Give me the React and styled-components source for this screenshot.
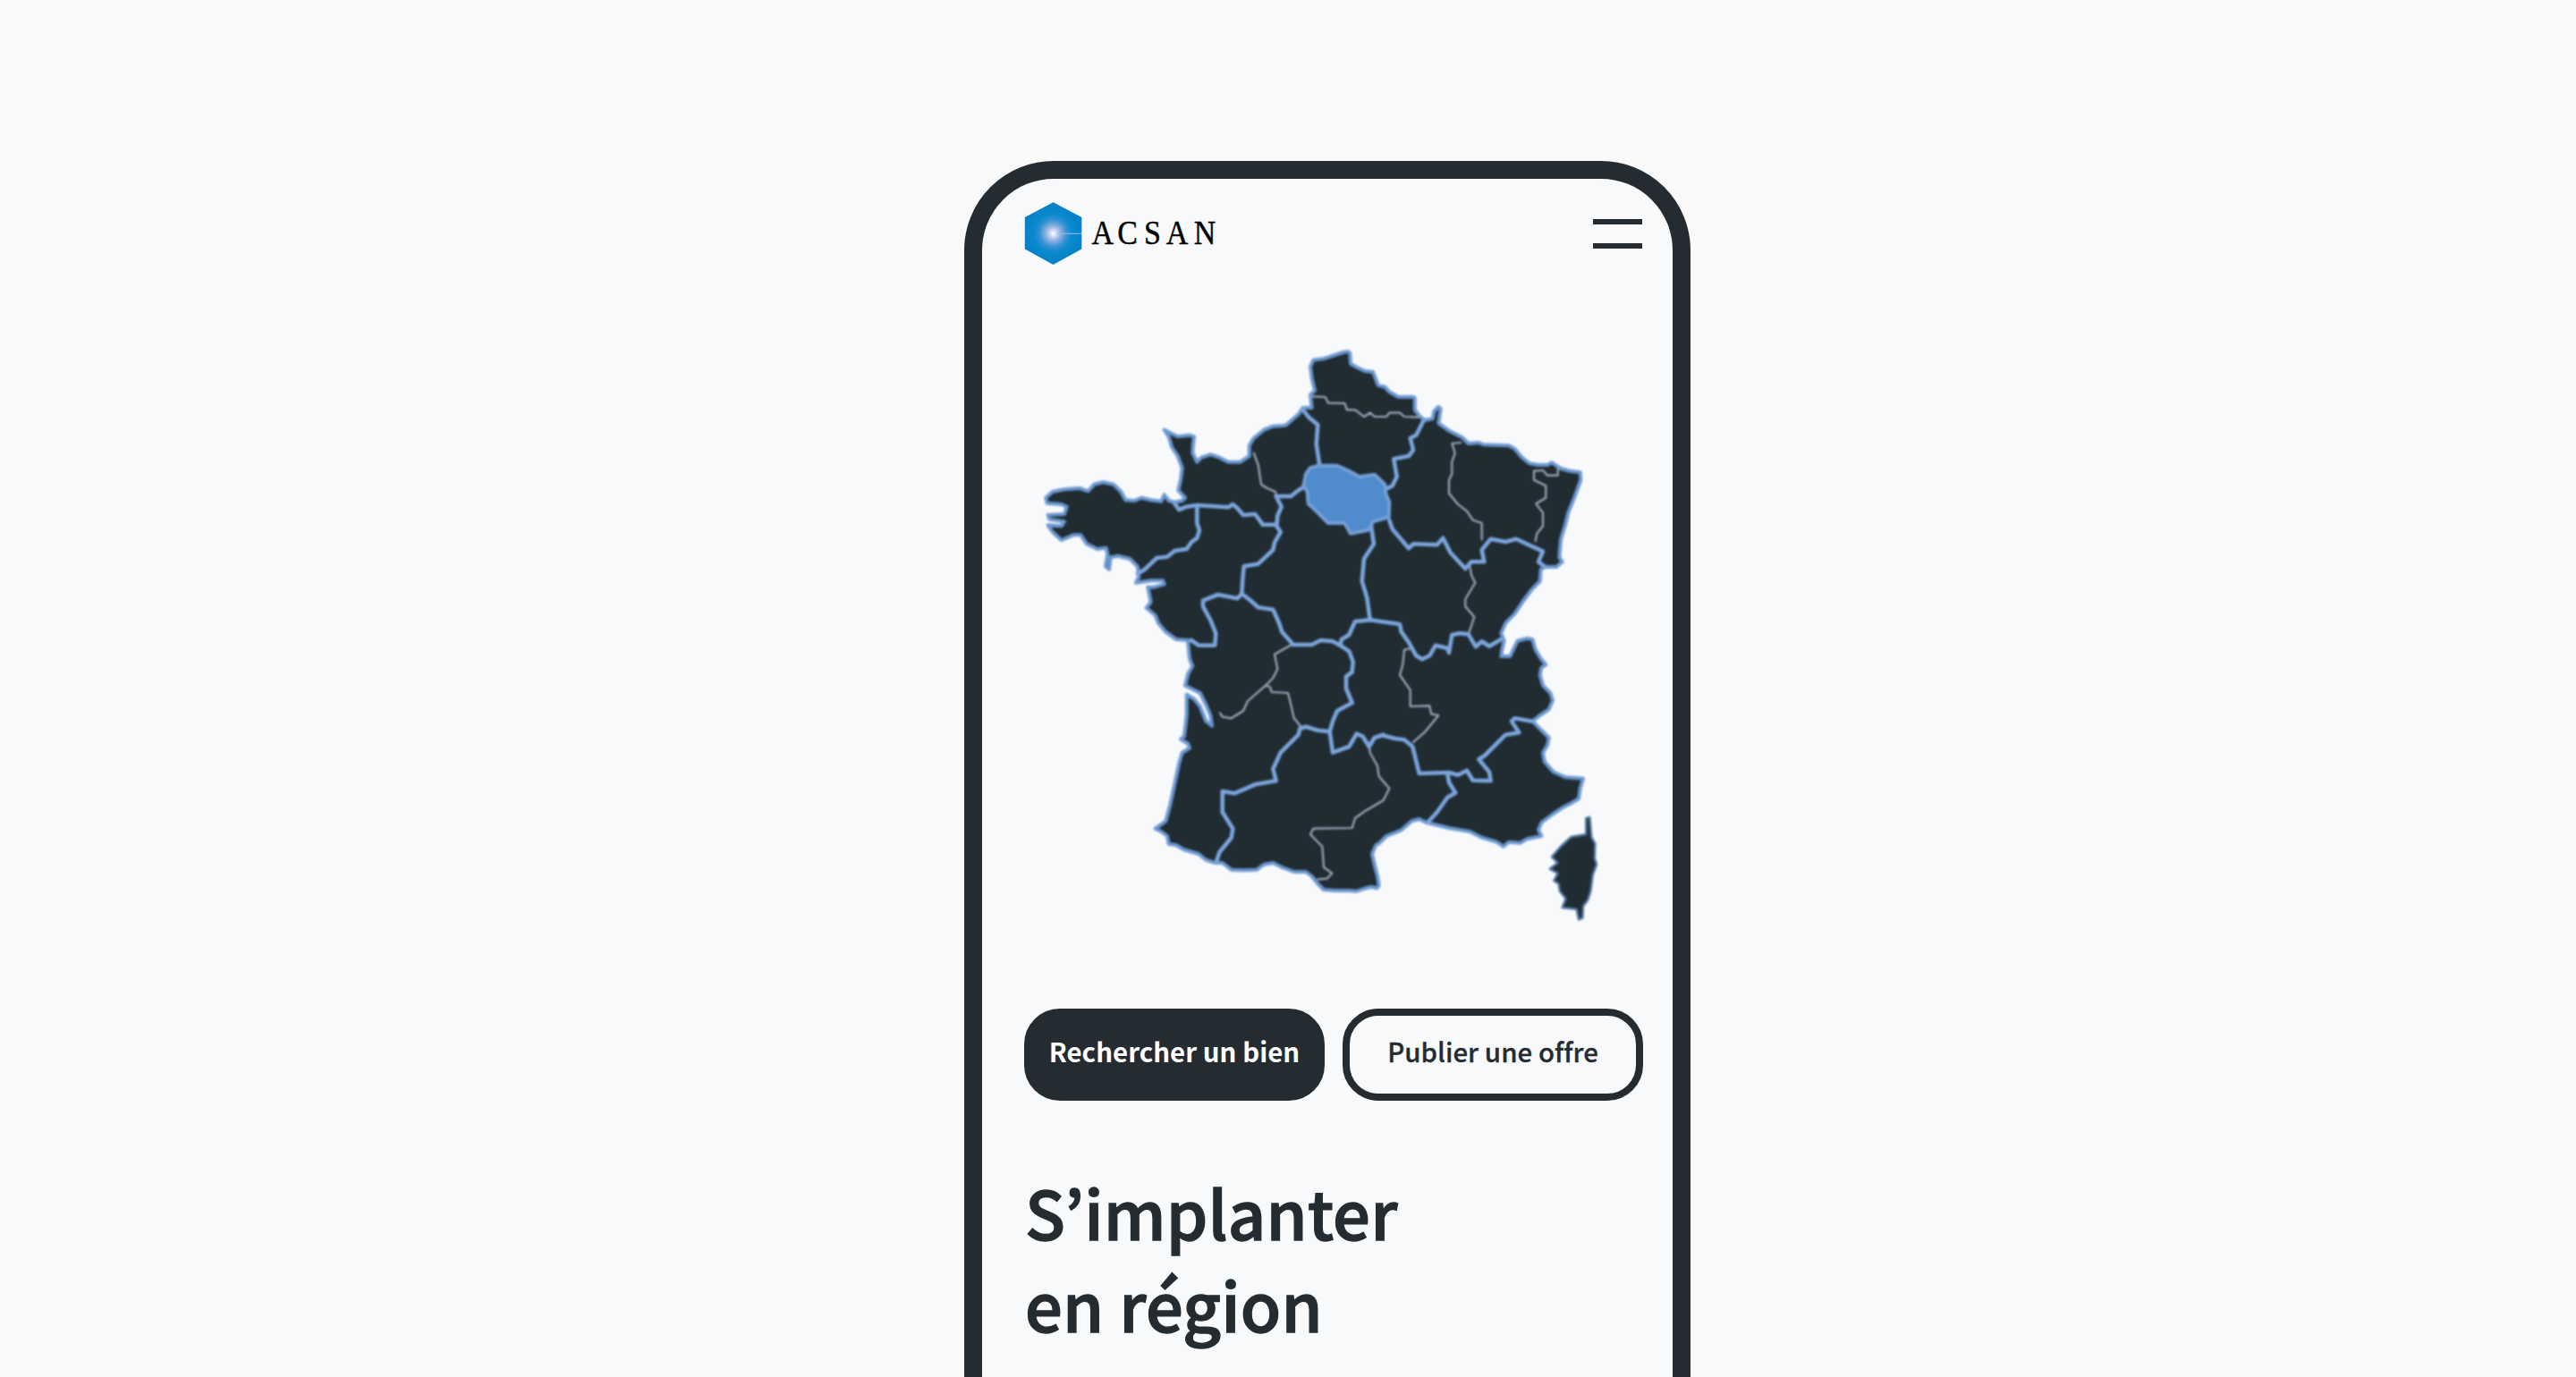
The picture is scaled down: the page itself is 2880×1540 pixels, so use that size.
import React from "react";
import styled, { createGlobalStyle } from "styled-components";

const INK = "#242c32";
const PAPER = "#f8f9fb";

const GlobalStyle = createGlobalStyle`
  *, *::before, *::after { box-sizing: border-box; }
  body {
    margin: 0;
    background: #f9f9f9;
    color: ${INK};
    font-family: "Noto Sans CJK KR", "Noto Sans CJK JP", "Noto Sans", sans-serif;
  }
`;

const Stage = styled.main`
  height: 1540px;
  display: flex;
  justify-content: center;
  align-items: flex-start;
  padding: 180px 0 0 88px;
  overflow: hidden;
`;

const Phone = styled.section`
  width: 812px;
  height: 1600px;
  flex: none;
  display: flex;
  flex-direction: column;
  padding: 26px 33px 0 47px;
  border: 20px solid ${INK};
  border-radius: 100px;
  background: ${PAPER};
`;

const Header = styled.header`
  height: 70px;
  display: flex;
  align-items: center;
  justify-content: space-between;
`;

const Brand = styled.svg`
  width: 220px;
  height: 70px;
  display: block;
  overflow: visible;
`;

const BrandName = styled.text`
  font-family: "Liberation Serif", serif;
  font-size: 34px;
  fill: #050505;
  stroke: #050505;
  stroke-width: 0.4px;
`;

const MenuButton = styled.button`
  width: 55px;
  height: 33px;
  margin: 0 1px 0 0;
  padding: 0;
  display: flex;
  flex-direction: column;
  justify-content: space-between;
  border: 0;
  background: none;
`;

const MenuBar = styled.span`
  height: 6px;
  background: ${INK};
`;

const MapFigure = styled.svg`
  width: 660px;
  height: 680px;
  margin: 74px 0 0 -5px;
  display: block;
  flex: none;
`;

const Actions = styled.div`
  display: flex;
  gap: 20px;
  margin-top: 78px;
`;

const Action = styled.button`
  flex: 1;
  height: 103px;
  padding: 0 0 10px;
  border: 8px solid ${INK};
  border-radius: 40px;
  background: ${({ $solid }) => ($solid ? INK : PAPER)};
  color: ${({ $solid }) => ($solid ? "#ffffff" : INK)};
  font-family: inherit;
  font-size: 29.4px;
  font-weight: ${({ $solid }) => ($solid ? 700 : 500)};
  letter-spacing: 0.06px;
  -webkit-text-stroke: ${({ $solid }) => ($solid ? "0" : "0.3px")} currentColor;
  white-space: nowrap;
`;

const Title = styled.h1`
  margin: 72px 0 0 1px;
  font-size: 74px;
  line-height: 103px;
  font-weight: 500;
  letter-spacing: 0.2px;
  -webkit-text-stroke: 1.4px currentColor;
`;

/* The map is drawn on five overlapping sheets, three units to a pixel. */
const SHEETS = {
  w: [1140, 460],
  n: [1280, 380],
  ne: [1420, 370],
  sw: [1260, 660],
  se: [1540, 580],
};

const trace = (...legs) =>
  legs
    .map(([sheet, points]) => {
      const [ox, oy] = SHEETS[sheet];
      return points
        .split(" ")
        .map((pair) => {
          const [x, y] = pair.split(",").map(Number);
          return `${(ox + x / 3).toFixed(1)},${(oy + y / 3).toFixed(1)}`;
        })
        .join(" ");
    })
    .join(" ");

const MAINLAND = trace(
  ["ne", "145,98 185,92 245,72 262,70 268,75 270,110 290,122 318,135 345,138 352,155 362,182 385,188 400,205 430,222 480,222 485,225 485,265 500,285 520,300 545,295 550,270 565,255 572,262 565,310 600,335 645,358 665,378 700,375 715,382 800,385 820,395 845,425 870,445 900,450 930,450 945,442 975,462 1005,470 1040,475 1042,500 1020,560 1000,610 990,650 975,700 970,760 980,775 960,792 925,792"],
  ["se", "548,170 545,210 520,235 490,275 460,320 430,350 415,385 425,410 418,440 415,462 445,462 460,430 470,410 500,402 520,405 530,440 548,470 565,490 550,500 545,525 555,560 580,585 588,610 575,640 545,660 520,680 540,700 575,735 570,760 555,785 560,815 590,850 630,868 690,872 680,905 675,940 650,955 620,970 590,990 550,1020 540,1045 550,1065 500,1075 480,1088 440,1085 422,1100 400,1085 350,1070 310,1050 240,1038 200,1028 165,1020 140,1008 115,1015 80,1045 30,1065 5,1090"],
  ["sw", "835,855 822,885 830,920 840,960 845,990 838,1000 820,995 800,1000 770,1010 740,1008 700,1008 660,1005 640,985 620,960 600,945 560,945 520,930 490,915 460,920 435,938 390,940 350,938 320,915 295,915 265,905 240,885 190,870 165,855 140,852 135,825 115,810 95,800 130,775 145,720 160,650 175,580 185,545 210,530 205,515 180,500 192,490 200,420 200,350 225,365 245,390 265,440 285,455 280,420 265,385 245,345 215,330 195,320 200,300 205,280 220,255 210,230 205,180"],
  ["w", "565,768 525,765 490,740 465,710 455,685 425,660 440,640 430,590 450,590 485,580 480,568 440,568 390,575 400,555 395,520 370,495 330,485 305,490 300,530 288,520 295,480 290,458 260,462 225,445 205,415 180,415 140,432 110,405 95,382 140,385 150,370 100,362 95,348 150,345 158,320 140,312 92,308 88,290 110,270 150,262 200,258 230,268 250,245 280,238 315,245 340,270 355,298 385,300 410,290 440,298 475,302 485,280 500,300 520,305 545,300 555,290 532,265 540,230 545,190 530,150 510,120 500,85 485,62 510,75 530,85 570,80 585,85 582,110 580,140 595,170 610,155 640,145 670,155 700,170 740,170 770,150 770,115 785,90 820,62 850,50 885,48"],
  ["n", "475,285 515,250 530,228 560,228 555,185 570,170 560,130 555,90"]
);

const CORSICA = trace([
  "se",
  "700,1005 712,1002 718,1070 730,1090 728,1140 735,1160 722,1195 715,1250 705,1280 690,1300 688,1340 675,1345 668,1310 620,1305 632,1275 612,1250 608,1225 592,1215 605,1190 578,1175 605,1155 585,1135 615,1100 650,1068 700,1060",
]);

const ILE_DE_FRANCE = trace([
  "ne",
  "165,452 225,452 265,470 300,490 350,482 385,515 388,545 400,575 398,625 345,640 330,668 270,680 250,645 195,645 150,600 128,580 125,540 112,520 120,480 135,460",
]);

const BORDERS = [
  trace(["w", "520,310 535,330 560,320 595,315 700,322 715,312 730,325 750,348 790,345 815,380 860,380"]),
  trace(["w", "595,315 595,375 603,400 595,425 575,440 560,462 520,468 495,488 460,492 420,530 395,545"]),
  trace(["w", "860,285 878,320 865,350 862,385 875,405 855,440 850,465 800,512 752,520 748,565 745,612"]),
  trace(["n", "440,525 490,525 515,505 540,490"]),
  trace(["w", "745,612 730,628 665,615 615,635 615,655 640,700 658,745 655,785 600,785 575,768"]),
  trace(["w", "745,612 775,635 800,658 850,665 870,710 880,740 915,780"], ["sw", "555,183 620,183 650,168 690,172 715,185 745,205 758,240 755,275 735,290 735,330 755,378 705,405 690,440 680,475"]),
  trace(["sw", "715,185 720,165 745,150 765,105 815,100 870,108"], ["se", "60,352 75,355 80,380 105,415 130,460 150,472 175,460 195,425 235,435 240,450 250,390 275,385 305,388 330,430 350,412 375,428 415,405"]),
  trace(["ne", "335,970 325,895 308,840 315,765 348,715 337,640"]),
  trace(["ne", "110,265 130,290 160,315 155,380 165,445"]),
  trace(["ne", "515,300 490,350 470,360 480,400 465,420 415,430 425,490 410,520 390,530"]),
  trace(["ne", "400,635 410,665 465,730 480,715 560,718 580,695 605,745 655,798 675,775 718,775 710,735 740,698 790,708 825,698 860,715 915,740 900,775 920,790"]),
  trace(["sw", "680,475 640,470 600,458 580,465 575,485 515,545 490,600 500,640 430,652 360,682 320,675 320,745 355,800 350,830 310,880 300,912"]),
  trace(["sw", "680,475 690,545 745,525 770,482 790,490 812,525 830,495 860,485"], ["se", "20,728 60,738 90,742 118,765 140,855 240,852 270,860 300,845 320,878 380,880 375,850 340,808 360,795 430,725 475,718 450,680 460,670 520,680"]),
  trace(["se", "235,855 240,885 262,920 235,935 200,985 170,1018"]),
];

const FINE_BORDERS = [
  trace(["ne", "140,220 185,222 195,242 250,243 258,265 285,265 315,288 335,275 350,288 390,288 400,275 435,275 450,288 500,290"]),
  trace(["ne", "640,375 610,378 620,410 610,440 610,480 600,500 600,545 630,582 660,605 680,635 710,645 710,700"]),
  trace(["ne", "965,460 965,485 930,485 915,468 885,470 885,500 925,520 925,560 892,580 915,610 915,655 895,680 890,705"]),
  trace(["se", "310,160 315,190 328,215 295,270 295,295 325,330 305,388"]),
  trace(["w", "785,140 800,180 810,245 830,258 858,270 860,285"]),
  trace(["sw", "548,185 495,215 505,265 490,295 465,320 405,372 390,405 350,430 320,425 312,412"]),
  trace(["sw", "465,320 480,325 485,342 540,345 550,385 560,430 585,460"]),
  trace(["sw", "812,525 815,545 840,590 845,625 880,665 860,705 800,740 765,765 755,798 625,800 615,820 655,860 660,930 688,950 670,968 640,970"]),
  trace(["se", "115,435 90,440 85,490 75,525 110,575 110,630 175,628 180,655 205,660 160,715 120,750"]),
];

function Logo() {
  return (
    <Brand viewBox="1145 226 220 70" role="img" aria-label="ACSAN">
      <defs>
        <radialGradient id="glow" gradientUnits="userSpaceOnUse" cx="1177.5" cy="261" r="35">
          <stop offset="0" stopColor="#ffffff" />
          <stop offset="0.07" stopColor="#dfe5f7" />
          <stop offset="0.24" stopColor="#8fafe0" />
          <stop offset="0.44" stopColor="#3391d3" />
          <stop offset="0.62" stopColor="#0889cf" />
          <stop offset="1" stopColor="#077fc4" />
        </radialGradient>
      </defs>
      <polygon points="1177.5,226.3 1209.3,243 1209.3,278.5 1177.5,296 1145.8,278.5 1145.8,243" fill="url(#glow)" />
      <line x1="1181" y1="261.3" x2="1209" y2="261.3" stroke="#8fc3ea" strokeWidth="1" />
      <BrandName transform="translate(0 272.6) scale(1 1.13)" x="1220.6 1249.3 1279 1303.7 1334.8" y="0">
        ACSAN
      </BrandName>
    </Brand>
  );
}

function FranceMap() {
  return (
    <MapFigure viewBox="1140 370 660 680" role="img" aria-label="France">
      <defs>
        <filter id="soften" x="-5%" y="-5%" width="110%" height="110%" colorInterpolationFilters="sRGB">
          <feGaussianBlur stdDeviation="1" />
        </filter>
      </defs>
      <g filter="url(#soften)" strokeLinejoin="round" strokeLinecap="round">
        <g fill="#202c31" stroke="#6a97d0" strokeWidth="4">
          <polygon points={MAINLAND} />
          <polygon points={CORSICA} stroke="#4c719c" strokeWidth="2.5" />
        </g>
        <g fill="none" stroke="#9caabd" strokeWidth="2.2">
          {FINE_BORDERS.map((points) => (
            <polyline key={points} points={points} />
          ))}
        </g>
        <g fill="none" stroke="#7ba5dd" strokeWidth="4.6">
          {BORDERS.map((points) => (
            <polyline key={points} points={points} />
          ))}
        </g>
        <polygon points={ILE_DE_FRANCE} fill="#508bcb" stroke="#739fd8" strokeWidth="4" />
      </g>
    </MapFigure>
  );
}

export default function App() {
  return (
    <>
      <GlobalStyle />
      <Stage>
        <Phone>
          <Header>
            <Logo />
            <MenuButton aria-label="Menu">
              <MenuBar />
              <MenuBar />
            </MenuButton>
          </Header>
          <FranceMap />
          <Actions>
            <Action $solid>Rechercher un bien</Action>
            <Action>Publier une offre</Action>
          </Actions>
          <Title>
            S’implanter
            <br />
            en région
          </Title>
        </Phone>
      </Stage>
    </>
  );
}
